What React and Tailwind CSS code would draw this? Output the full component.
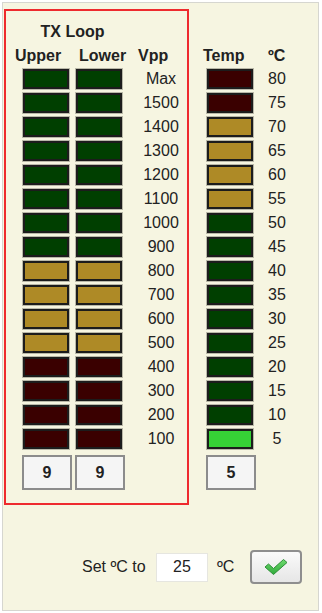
import React from 'react';

const vppRows = [
  { label: 'Max', upper: 'g', lower: 'g' },
  { label: '1500', upper: 'g', lower: 'g' },
  { label: '1400', upper: 'g', lower: 'g' },
  { label: '1300', upper: 'g', lower: 'g' },
  { label: '1200', upper: 'g', lower: 'g' },
  { label: '1100', upper: 'g', lower: 'g' },
  { label: '1000', upper: 'g', lower: 'g' },
  { label: '900', upper: 'g', lower: 'g' },
  { label: '800', upper: 'y', lower: 'y' },
  { label: '700', upper: 'y', lower: 'y' },
  { label: '600', upper: 'y', lower: 'y' },
  { label: '500', upper: 'y', lower: 'y' },
  { label: '400', upper: 'r', lower: 'r' },
  { label: '300', upper: 'r', lower: 'r' },
  { label: '200', upper: 'r', lower: 'r' },
  { label: '100', upper: 'r', lower: 'r' },
];

const tempRows = [
  { label: '80', c: 'r' },
  { label: '75', c: 'r' },
  { label: '70', c: 'y' },
  { label: '65', c: 'y' },
  { label: '60', c: 'y' },
  { label: '55', c: 'y' },
  { label: '50', c: 'g' },
  { label: '45', c: 'g' },
  { label: '40', c: 'g' },
  { label: '35', c: 'g' },
  { label: '30', c: 'g' },
  { label: '25', c: 'g' },
  { label: '20', c: 'g' },
  { label: '15', c: 'g' },
  { label: '10', c: 'g' },
  { label: '5', c: 'l' },
];

const cellColor = {
  g: 'bg-[#003f00]',
  y: 'bg-[#ae8a26]',
  r: 'bg-[#3a0000]',
  l: 'bg-[#36d136]',
};

const Cell = ({ c }) => (
  <div className="w-[48px] h-[22px] border-[1px] border-[#b9b8a8] shrink-0">
    <div className={`w-full h-full border-2 border-[#1c1c1c] ${cellColor[c]}`} />
  </div>
);

const Counter = ({ value }) => (
  <div className="w-[50px] h-[35px] border-2 border-[#8c8c8c] bg-[#f5f5f5] flex items-center justify-center font-bold text-[16px] text-[#222]">
    {value}
  </div>
);

const App = () => {
  return (
    <div
      className="w-[322px] h-[613px] bg-white pt-[2px] pl-[2px] overflow-hidden"
      style={{ fontFamily: '"Liberation Sans", Arial, sans-serif' }}
    >
      <div className="w-[317px] h-[609px] border border-[#d6d6d0] bg-[#f6f5e1]">
        <div className="flex items-start mt-[6px] ml-[1px]">
          {/* TX Loop box */}
          <div className="w-[185px] h-[496px] border-2 border-[#ee2a2e]">
            <div className="w-[117px] pl-[16px] pt-[11px] text-center font-bold text-[16px] leading-[20px] text-[#222]">
              TX Loop
            </div>
            <div className="flex mt-[4px] pl-[9px] font-bold text-[16px] leading-[20px] text-[#222]">
              <span className="w-[64px]">Upper</span>
              <span className="w-[59px]">Lower</span>
              <span>Vpp</span>
            </div>
            <div className="flex flex-col gap-[2px] mt-[2px] pl-[16px]">
              {vppRows.map((row) => (
                <div key={row.label} className="flex items-center h-[22px]">
                  <Cell c={row.upper} />
                  <div className="w-[5px]" />
                  <Cell c={row.lower} />
                  <span className="ml-[12px] w-[52px] text-center text-[16px] leading-[20px] text-[#222]">
                    {row.label}
                  </span>
                </div>
              ))}
            </div>
            <div className="flex gap-[3px] mt-[5px] pl-[16px]">
              <Counter value="9" />
              <Counter value="9" />
            </div>
          </div>

          {/* Temp column */}
          <div className="ml-[14px] pt-[37px]">
            <div className="flex font-bold text-[16px] leading-[20px] text-[#222]">
              <span className="w-[65px]">Temp</span>
              <span>ºC</span>
            </div>
            <div className="flex flex-col gap-[2px] mt-[2px] pl-[3px]">
              {tempRows.map((row) => (
                <div key={row.label} className="flex items-center h-[22px]">
                  <Cell c={row.c} />
                  <span className="w-[46px] text-center text-[16px] leading-[20px] text-[#222]">
                    {row.label}
                  </span>
                </div>
              ))}
            </div>
            <div className="mt-[5px] pl-[3px]">
              <Counter value="5" />
            </div>
          </div>
        </div>

        {/* Set temperature row */}
        <div className="flex items-center mt-[45px] pl-[79px] text-[16px] text-[#222]">
          <span className="w-[63px] whitespace-nowrap">Set ºC to</span>
          <div className="ml-[11px] w-[52px] h-[29px] bg-white border border-[#e6e6e0] flex items-center justify-center">
            25
          </div>
          <span className="ml-[9px]">ºC</span>
          <button className="ml-[16px] w-[52px] h-[34px] rounded-[4px] border-2 border-[#8e8e8e] bg-gradient-to-b from-[#fafafa] to-[#e6e6e6] flex items-center justify-center">
            <svg width="26" height="20" viewBox="0 0 26 20">
              <defs>
                <linearGradient id="chk" x1="0" y1="0" x2="0" y2="1">
                  <stop offset="0" stopColor="#6fdc6f" />
                  <stop offset="1" stopColor="#2fa83a" />
                </linearGradient>
              </defs>
              <path
                d="M2 10 L5.5 7 L10.5 11.5 L20.5 2.5 L24 5.5 L10.5 17.5 Z"
                fill="url(#chk)"
                stroke="#2e8f38"
                strokeWidth="1"
                strokeLinejoin="round"
              />
            </svg>
          </button>
        </div>
      </div>
    </div>
  );
};

export default App;
